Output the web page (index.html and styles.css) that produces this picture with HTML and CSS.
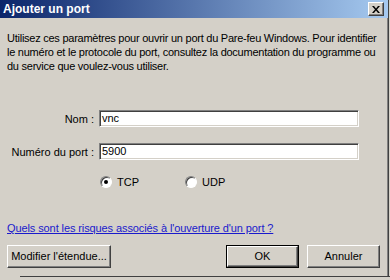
FILE: index.html
```html
<!DOCTYPE html>
<html lang="fr">
<head>
  <meta charset="utf-8"/>
  <title>Ajouter un port</title>
  <link rel="stylesheet" href="styles.css">
</head>
<body>

  <div class="fenetre">

    <div class="titre">
      <span class="titre-texte">Ajouter un port</span>
      <div class="fermer">
        <svg width="8" height="7" viewBox="0 0 8 7">
          <path d="M0 0h2l2 2.5 2-2.5h2l-3 3.5 3 3.5h-2l-2-2.5-2 2.5h-2l3-3.5z" fill="#000"/>
        </svg>
      </div>
    </div>

    <div class="contenu">

      <p class="intro">Utilisez ces paramètres pour ouvrir un port du Pare-feu Windows. Pour identifier<br>
      le numéro et le protocole du port, consultez la documentation du programme ou<br>
      du service que voulez-vous utiliser.</p>

      <div class="champs">
        <div class="ligne">
          <label class="etiquette">Nom :</label>
          <div class="saisie">vnc</div>
        </div>
        <div class="ligne">
          <label class="etiquette">Numéro du port :</label>
          <div class="saisie">5900</div>
        </div>
        <div class="protocoles">
          <div class="radio"><span class="rond coche"></span>TCP</div>
          <div class="radio"><span class="rond"></span>UDP</div>
        </div>
      </div>

      <a class="lien" href="#">Quels sont les risques associés à l'ouverture d'un port ?</a>

      <div class="boutons">
        <div class="bouton large">Modifier l'étendue...</div>
        <div class="droite">
          <div class="bouton defaut">OK</div>
          <div class="bouton">Annuler</div>
        </div>
      </div>

    </div>
  </div>

  <div class="bas"></div>

</body>
</html>
```

FILE: styles.css
```css
body{
  margin:0;
  width:390px;
  height:280px;
  overflow:hidden;
  background-color:#d4d0c8;
  font-family:"Liberation Sans", Arial, sans-serif;
  font-size:11px;
  color:#000;
}

.fenetre{
  width:388px;
  height:276px;
  border-right:1px solid #404040;
  box-shadow:inset -1px 0 #808080;
}

.titre{
  height:18px;
  display:flex;
  align-items:center;
  justify-content:space-between;
  padding:0 4px 0 3px;
  background:linear-gradient(to right, #0a246a, #a6caf0);
}

.titre-texte{
  color:white;
  font-weight:bold;
  font-size:12px;
}

.fermer{
  width:14px;
  height:12px;
  display:flex;
  align-items:center;
  justify-content:center;
  background-color:#d4d0c8;
  border:1px solid;
  border-color:#fff #404040 #404040 #fff;
  box-shadow:inset -1px -1px #808080;
}

.contenu{
  padding:13px 4px 0 7px;
}

.intro{
  margin:0;
  line-height:14px;
  letter-spacing:-0.25px;
  white-space:nowrap;
}

.champs{
  margin-top:37px;
}

.ligne{
  display:flex;
  align-items:center;
  margin-bottom:16px;
}

.etiquette{
  width:87px;
  text-align:right;
  padding-right:5px;
}

.saisie{
  width:254px;
  height:13px;
  padding:1px 2px;
  background-color:white;
  border:1px solid;
  border-color:#808080 #fff #fff #808080;
  box-shadow:inset 1px 1px #404040, inset -1px -1px #d4d0c8;
  line-height:13px;
}

.protocoles{
  display:flex;
  padding-left:93px;
  margin-top:8px;
}

.radio{
  display:flex;
  align-items:center;
  width:85px;
}

.rond{
  width:12px;
  height:12px;
  margin-right:5px;
  box-sizing:border-box;
  border-radius:50%;
  background-color:white;
  border:1px solid;
  border-color:#808080 #fff #fff #808080;
  box-shadow:inset 1px 1px #404040;
  display:flex;
  align-items:center;
  justify-content:center;
}

.coche::after{
  content:"";
  width:4px;
  height:4px;
  border-radius:50%;
  background-color:black;
}

.lien{
  display:block;
  margin-top:34px;
  color:#1a1acc;
  letter-spacing:-0.1px;
}

.boutons{
  display:flex;
  justify-content:space-between;
  margin-top:11px;
  padding-right:4px;
}

.droite{
  display:flex;
  gap:9px;
}

.bouton{
  width:71px;
  height:21px;
  line-height:21px;
  text-align:center;
  border:1px solid;
  border-color:#fff #404040 #404040 #fff;
  box-shadow:inset -1px -1px #808080;
}

.large{
  width:102px;
}

.defaut{
  width:69px;
  height:19px;
  line-height:19px;
  outline:1px solid #000;
  outline-offset:0;
  margin:1px 0;
}

.bas{
  height:4px;
  margin-left:20px;
  border-top:1px solid #404040;
}
```
